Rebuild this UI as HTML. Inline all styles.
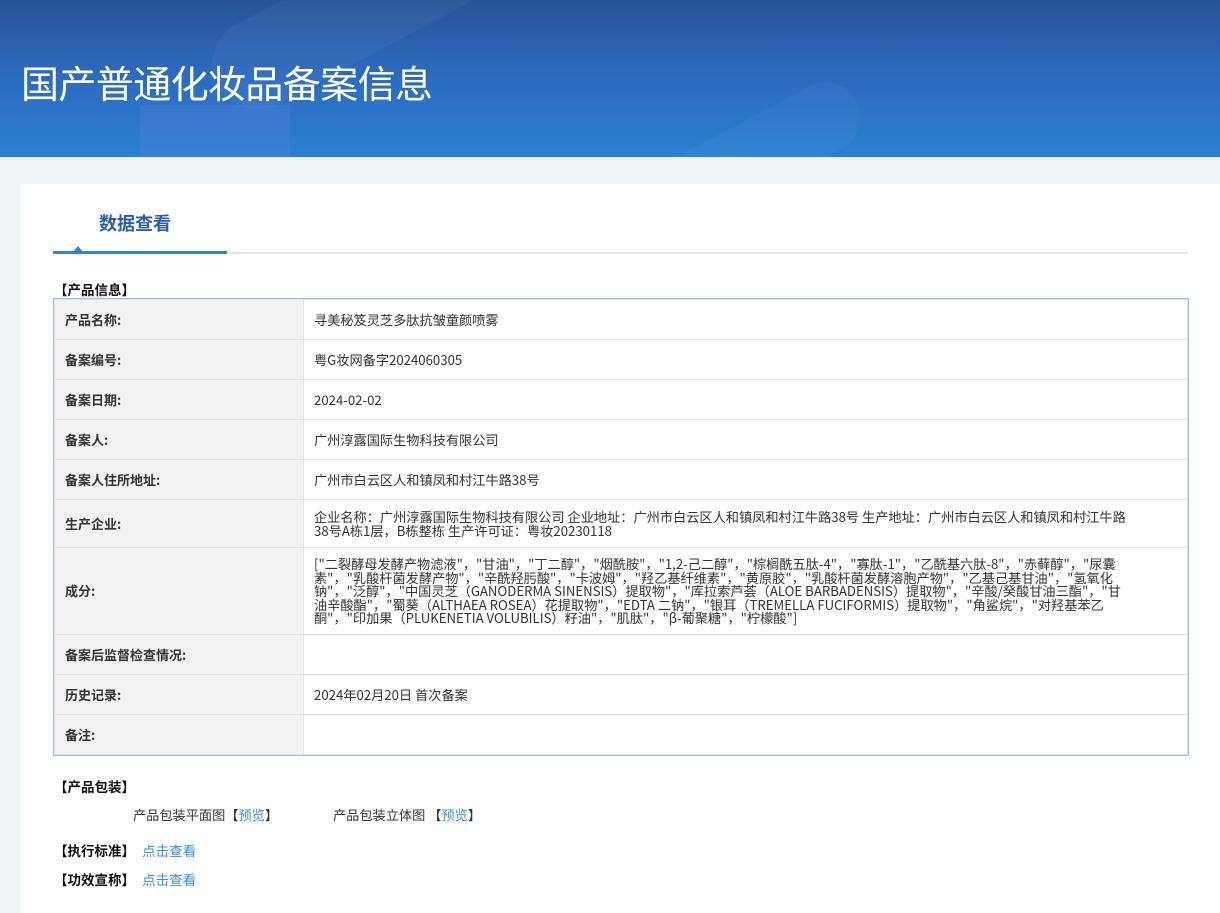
<!DOCTYPE html>
<html><head><meta charset="utf-8"><style>
*{margin:0;padding:0;box-sizing:border-box}
body{width:1220px;height:913px;overflow:hidden;background:#eff3f6;font-family:"Noto Sans CJK SC","Liberation Sans",sans-serif;color:#333;font-size:13px;position:relative}
.hero{position:absolute;left:0;top:0;width:1220px;height:157px;background:linear-gradient(180deg,#2a5399 0%,#2c6bc0 50%,#2a80d0 100%);overflow:hidden}
.hero h1{position:absolute;left:21px;top:56px;font-size:38px;font-weight:normal;color:#fff;letter-spacing:-0.6px;font-family:"Noto Sans CJK SC",sans-serif;line-height:52px}
.b1{position:absolute;left:200px;top:-30px;width:300px;height:90px;border-radius:45px;background:rgba(255,255,255,.04);transform:rotate(-28deg)}
.b2{position:absolute;left:140px;top:105px;width:150px;height:60px;background:rgba(90,130,230,.3)}
.b3{position:absolute;left:640px;top:120px;width:230px;height:70px;border-radius:35px;background:rgba(255,255,255,.03);transform:rotate(-28deg)}
.main{position:absolute;left:21px;top:184px;width:1199px;height:729px;background:#fff}
.tab{position:absolute;left:78px;top:26px;font-size:18px;font-weight:bold;color:#2a5ca8;line-height:26px}
.line{position:absolute;left:32px;top:68px;width:1135px;height:2px;background:#e6e6e6}
.line2{position:absolute;left:32px;top:67px;width:174px;height:3px;background:#2a87d8}
.tri{position:absolute;left:52px;top:62px;width:0;height:0;border-left:5px solid transparent;border-right:5px solid transparent;border-bottom:6px solid #2a87d8}
.sec{position:absolute;left:33px;font-weight:bold;color:#111;font-size:13.5px;line-height:18px}
table{position:absolute;left:33px;top:115px;width:1134px;border-collapse:collapse;outline:1px solid #9cbbe6}
td{border:1px solid #e3e3e3;padding:0 10px;height:40px;vertical-align:middle;line-height:16px}
td.l{width:249px;background:#f2f2f2;font-weight:bold;color:#333}
td.v{font-size:13.2px}
.blue{color:#3a8ee0}
.p{position:absolute;font-size:13.2px;line-height:18px}
</style></head><body>
<div class="hero"><div class="b1"></div><div class="b2"></div><div class="b3"></div><h1>国产普通化妆品备案信息</h1></div>
<div class="main">
<div class="tab">数据查看</div>
<div class="line"></div><div class="line2"></div><div class="tri"></div>
<div class="sec" style="top:96px">【产品信息】</div>
<table>
<tr><td class="l">产品名称:</td><td class="v">寻美秘笈灵芝多肽抗皱童颜喷雾</td></tr>
<tr><td class="l">备案编号:</td><td class="v">粤G妆网备字2024060305</td></tr>
<tr><td class="l">备案日期:</td><td class="v">2024-02-02</td></tr>
<tr><td class="l">备案人:</td><td class="v">广州淳露国际生物科技有限公司</td></tr>
<tr><td class="l">备案人住所地址:</td><td class="v">广州市白云区人和镇凤和村江牛路38号</td></tr>
<tr><td class="l" style="height:48px">生产企业:</td><td class="v" style="line-height:13.5px;padding-right:55px">企业名称：广州淳露国际生物科技有限公司 企业地址：广州市白云区人和镇凤和村江牛路38号 生产地址：广州市白云区人和镇凤和村江牛路38号A栋1层，B栋整栋 生产许可证：粤妆20230118</td></tr>
<tr><td class="l" style="height:87px">成分:</td><td class="v" style="line-height:13.5px;padding-right:55px">["二裂酵母发酵产物滤液"，"甘油"，"丁二醇"，"烟酰胺"，"1,2-己二醇"，"棕榈酰五肽-4"，"寡肽-1"，"乙酰基六肽-8"，"赤藓醇"，"尿囊素"，"乳酸杆菌发酵产物"，"辛酰羟肟酸"，"卡波姆"，"羟乙基纤维素"，"黄原胶"，"乳酸杆菌发酵溶胞产物"，"乙基己基甘油"，"氢氧化钠"，"泛醇"，"中国灵芝（GANODERMA SINENSIS）提取物"，"库拉索芦荟（ALOE BARBADENSIS）提取物"，"辛酸/癸酸甘油三酯"，"甘油辛酸酯"，"蜀葵（ALTHAEA ROSEA）花提取物"，"EDTA 二钠"，"银耳（TREMELLA FUCIFORMIS）提取物"，"角鲨烷"，"对羟基苯乙酮"，"印加果（PLUKENETIA VOLUBILIS）籽油"，"肌肽"，"β-葡聚糖"，"柠檬酸"]</td></tr>
<tr><td class="l">备案后监督检查情况:</td><td class="v"></td></tr>
<tr><td class="l">历史记录:</td><td class="v">2024年02月20日 首次备案</td></tr>
<tr><td class="l">备注:</td><td class="v"></td></tr>
</table>
<div class="sec" style="top:593px">【产品包装】</div>
<div class="p" style="left:112px;top:622px">产品包装平面图【<span class="blue">预览</span>】</div>
<div class="p" style="left:312px;top:622px">产品包装立体图 【<span class="blue">预览</span>】</div>
<div class="sec" style="top:657px">【执行标准】 <span class="blue" style="font-weight:normal;margin-left:4px">点击查看</span></div>
<div class="sec" style="top:686px">【功效宣称】 <span class="blue" style="font-weight:normal;margin-left:4px">点击查看</span></div>
</div>
</body></html>
